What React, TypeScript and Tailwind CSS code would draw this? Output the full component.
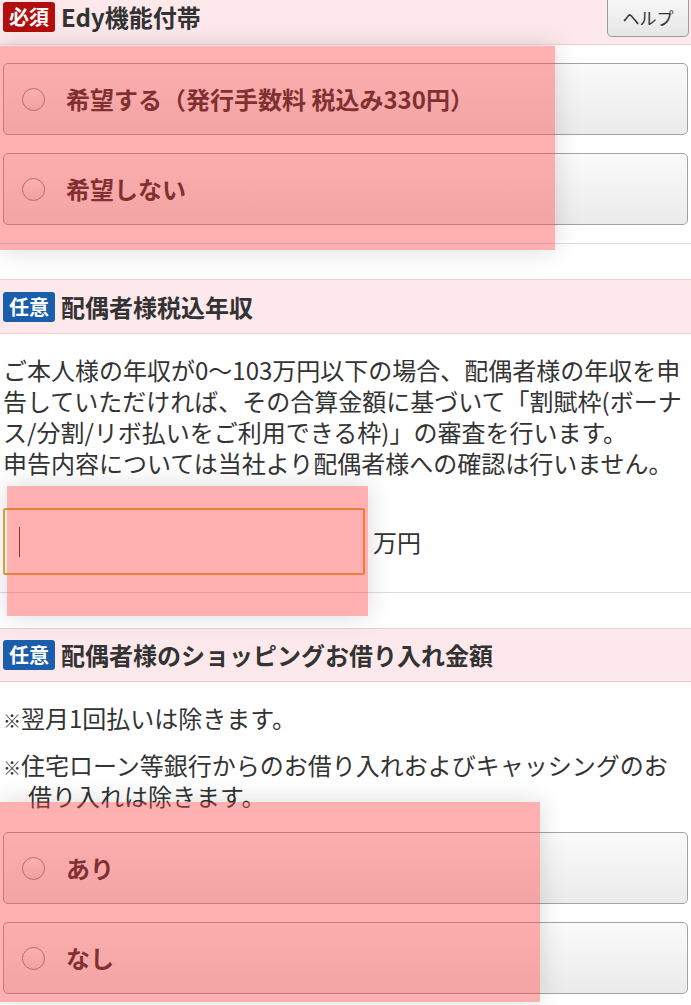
import React from 'react';

type BadgeKind = 'required' | 'optional';

const Badge: React.FC<{ kind: BadgeKind }> = ({ kind }) => (
  <span
    className={`inline-flex items-center justify-center w-[52px] h-[30px] rounded-[3px] text-white font-bold text-[20px] leading-none shrink-0 ${
      kind === 'required' ? 'bg-[#b30d0d]' : 'bg-[#1a5dab]'
    }`}
  >
    {kind === 'required' ? '必須' : '任意'}
  </span>
);

const SectionHeader: React.FC<{ kind: BadgeKind; title: string; className?: string; children?: React.ReactNode }> = ({
  kind,
  title,
  className = '',
  children,
}) => (
  <div
    className={`flex items-center bg-[#fde8eb] border-y border-[#f4cdd3] px-[3px] ${className}`}
  >
    <Badge kind={kind} />
    <h2 className="ml-[6px] text-[24px] font-bold text-[#333] leading-none flex-1">{title}</h2>
    {children}
  </div>
);

const RadioOption: React.FC<{ label: string }> = ({ label }) => (
  <label className="flex items-center h-[72px] rounded-[5px] border border-[#a3a3a3] bg-gradient-to-b from-[#fafafa] to-[#ebebeb] pl-[18px]">
    <span className="w-[23px] h-[23px] rounded-full border border-[#8a8a8a] bg-gradient-to-b from-white to-[#e4e4e4] shrink-0" />
    <span className="ml-[21px] text-[24px] font-bold text-[#2b2b2b] leading-none">{label}</span>
  </label>
);

export default function App() {
  return (
    <div className="relative w-full min-h-[1005px] overflow-hidden bg-white font-[Noto_Sans_CJK_JP,sans-serif] text-[#333]">
      {/* Edy */}
      <SectionHeader kind="required" title="Edy機能付帯" className="-mt-[10px] h-[55px] border-t-0">
        <button className="self-start mt-[3px] mr-[-1px] w-[82px] h-[44px] rounded-[5px] border border-[#9c9c9c] bg-gradient-to-b from-[#fafafa] to-[#e6e6e6] text-[17px] text-[#333] pt-[6px]">
          ヘルプ
        </button>
      </SectionHeader>
      <div className="flex flex-col gap-[18px] px-[3px] pt-[18px] pb-[18px] border-b border-[#e8d6d9]">
        <RadioOption label="希望する（発行手数料 税込み330円）" />
        <RadioOption label="希望しない" />
      </div>

      {/* Spouse income */}
      <SectionHeader kind="optional" title="配偶者様税込年収" className="mt-[35px] h-[55px]" />
      <div className="px-[3px] pt-[20px] pb-[17px] border-b border-[#e8d6d9]">
        <p className="text-[24px] leading-[31px] whitespace-nowrap">
          ご本人様の年収が0〜103万円以下の場合、配偶者様の年収を申
          <br />
          告していただければ、その合算金額に基づいて「割賦枠(ボーナ
          <br />
          ス/分割/リボ払いをご利用できる枠)」の審査を行います。
          <br />
          申告内容については当社より配偶者様への確認は行いません。
        </p>
        <div className="flex items-center mt-[30px]">
          <div className="flex items-center w-[362px] h-[67px] rounded-[2px] border-2 border-[#e2a83c] bg-white pl-[14px]">
            <span className="w-px h-[30px] bg-[#333]" />
          </div>
          <span className="ml-[8px] text-[24px] leading-none">万円</span>
        </div>
      </div>

      {/* Spouse shopping loans */}
      <SectionHeader kind="optional" title="配偶者様のショッピングお借り入れ金額" className="mt-[35px] h-[54px]" />
      <div className="px-[3px] pt-[20px]">
        <ul className="flex flex-col gap-[16px] text-[24px] leading-[31px]">
          <li className="pl-[25px] -indent-[25px]">
            <span className="text-[18px] leading-none">※</span>翌月1回払いは除きます。
          </li>
          <li className="pl-[25px] -indent-[25px]">
            <span className="text-[18px] leading-none">※</span>住宅ローン等銀行からのお借り入れおよびキャッシングのお借り入れは除きます。
          </li>
        </ul>
        <div className="flex flex-col gap-[18px] mt-[21px] pb-[18px]">
          <RadioOption label="あり" />
          <RadioOption label="なし" />
        </div>
      </div>

      {/* highlight overlays */}
      <div className="absolute left-0 top-[46px] w-[555px] h-[204px] bg-[rgba(255,60,60,0.4)] shadow-[0_0_24px_rgba(0,0,0,0.15)] pointer-events-none" />
      <div className="absolute left-[7px] top-[486px] w-[361px] h-[130px] bg-[rgba(255,60,60,0.4)] shadow-[0_0_24px_rgba(0,0,0,0.15)] pointer-events-none" />
      <div className="absolute left-0 top-[802px] w-[540px] h-[200px] bg-[rgba(255,60,60,0.4)] shadow-[0_0_24px_rgba(0,0,0,0.15)] pointer-events-none" />
    </div>
  );
}
